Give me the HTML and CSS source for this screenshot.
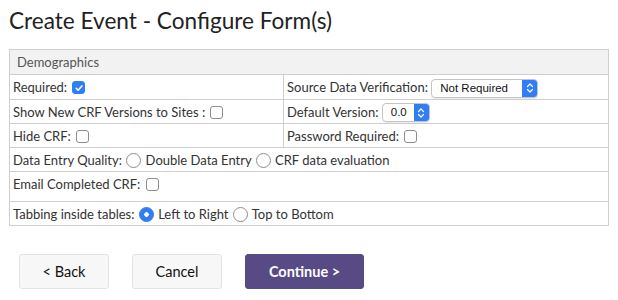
FILE: index.html
```html
<!DOCTYPE html>
<html lang="en">
<head>
  <meta charset="UTF-8" />
  <title>Create Event - Configure Form(s)</title>
  <link rel="stylesheet" href="styles.css">
</head>
<body>
  <h1>Create Event - Configure Form(s)</h1>

  <table class="form-table">
    <thead>
      <tr>
        <th colspan="2">Demographics</th>
      </tr>
    </thead>
    <tbody>
      <tr>
        <td class="col-left">Required: <span class="check checked"><svg viewBox="0 0 12 12" width="12" height="12"><path d="M3.2 6.3 5.1 8.2 8.9 3.9" fill="none" stroke="#fff" stroke-width="1.5" stroke-linecap="round" stroke-linejoin="round"/></svg></span></td>
        <td>Source Data Verification: <span class="select select-wide"><span class="select-text">Not Required</span><span class="select-arrow"><svg viewBox="0 0 8 12" width="8" height="12"><path d="M1.5 4.5 4 2 6.5 4.5M1.5 7.5 4 10 6.5 7.5" fill="none" stroke="#fff" stroke-width="1.2" stroke-linecap="round" stroke-linejoin="round"/></svg></span></span></td>
      </tr>
      <tr>
        <td class="col-left">Show New CRF Versions to Sites : <span class="check"></span></td>
        <td>Default Version: <span class="select select-small"><span class="select-text">0.0</span><span class="select-arrow"><svg viewBox="0 0 8 12" width="8" height="12"><path d="M1.5 4.5 4 2 6.5 4.5M1.5 7.5 4 10 6.5 7.5" fill="none" stroke="#fff" stroke-width="1.2" stroke-linecap="round" stroke-linejoin="round"/></svg></span></span></td>
      </tr>
      <tr>
        <td class="col-left">Hide CRF: <span class="check"></span></td>
        <td>Password Required: <span class="check"></span></td>
      </tr>
      <tr>
        <td colspan="2">Data Entry Quality: <span class="radio"></span> Double Data Entry <span class="radio"></span> CRF data evaluation</td>
      </tr>
      <tr>
        <td colspan="2" class="tall">Email Completed CRF: <span class="check"></span></td>
      </tr>
      <tr>
        <td colspan="2">Tabbing inside tables: <span class="radio selected"></span> Left to Right <span class="radio"></span> Top to Bottom</td>
      </tr>
    </tbody>
  </table>

  <div class="actions">
    <button class="btn">&lt; Back</button>
    <button class="btn">Cancel</button>
    <button class="btn btn-primary">Continue &gt;</button>
  </div>
</body>
</html>
```

FILE: styles.css
```css
body {
  margin: 0;
  padding: 0 9px;
  font-family: 'Lato', 'Liberation Sans', sans-serif;
  color: #333;
  background: #fff;
}

h1 {
  margin: 0;
  padding-top: 8px;
  height: 41px;
  font-size: 22.6px;
  font-weight: 400;
  line-height: 26px;
  color: #222;
}

.form-table {
  width: 600px;
  border-collapse: collapse;
  font-size: 13px;
}

.form-table th,
.form-table td {
  border: 1px solid #cfcfcf;
  padding: 4px 3px 3px;
  height: 16px;
  line-height: 16px;
  text-align: left;
  white-space: nowrap;
  vertical-align: top;
}

.form-table th {
  background-color: #f2f2f2;
  font-weight: 400;
  color: #555;
  padding: 4px 3px 4px 7px;
}

.form-table td.col-left {
  width: 267px;
}

.form-table td.tall {
  height: 22px;
}

.check,
.radio {
  display: inline-block;
  width: 11px;
  height: 11px;
  border: 1px solid #8e8e8e;
  border-radius: 3px;
  vertical-align: -2px;
  margin-left: 2px;
  background: #fff;
  box-sizing: content-box;
}

.check.checked {
  border-color: #2f7ef3;
  background: #2f7ef3;
}

.check svg {
  display: block;
  margin: -0.5px;
}

.radio {
  border-radius: 50%;
  width: 13px;
  height: 13px;
  vertical-align: -3px;
  margin: 0 1px;
}

.radio.selected {
  border-color: #2f7ef3;
  background: radial-gradient(circle, #fff 0 2px, #2f7ef3 2.5px);
}

.select {
  display: inline-flex;
  align-items: stretch;
  height: 17px;
  margin: -3px 0 -2px;
  border: 1px solid #c4c4c4;
  border-radius: 4px;
  vertical-align: middle;
  font-family: 'Liberation Sans', sans-serif;
  font-size: 11.5px;
  color: #111;
  overflow: hidden;
  box-shadow: 0 1px 1px rgba(0, 0, 0, 0.08);
}

.select-text {
  flex: 1;
  padding-left: 8px;
  line-height: 17px;
}

.select-arrow {
  width: 15px;
  background: #2f7ef3;
  display: flex;
  align-items: center;
  justify-content: center;
}

.select-wide {
  width: 105px;
}

.select-small {
  width: 46px;
}

.actions {
  display: flex;
  gap: 23px;
  padding: 28px 0 0 10px;
}

.btn {
  width: 90px;
  height: 35px;
  border: 1px solid #e3e3e3;
  border-radius: 3px;
  background: #f7f7f7;
  font-family: 'Lato', 'Liberation Sans', sans-serif;
  font-size: 14.5px;
  color: #111;
  padding: 0;
}

.btn-primary {
  width: 119px;
  background: #574a85;
  border-color: #574a85;
  color: #fff;
  font-weight: 700;
}
```
